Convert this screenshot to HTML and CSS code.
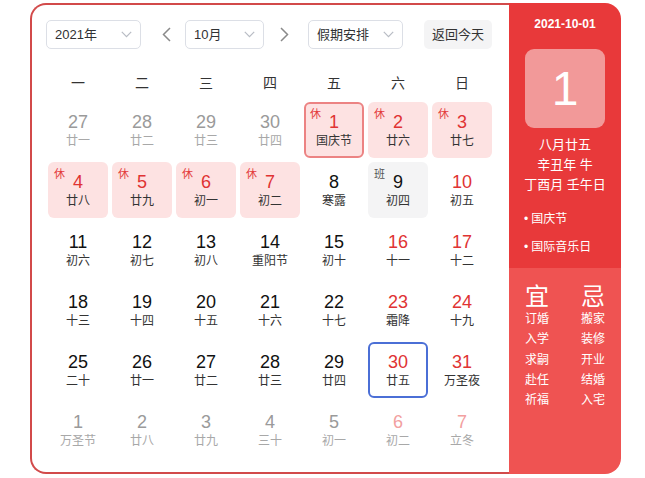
FILE: index.html
```html
<!DOCTYPE html>
<html lang="zh">
<head>
<meta charset="utf-8">
<title>日历</title>
<link rel="stylesheet" href="styles.css">
</head>
<body>
<div class="calendar">
  <div class="main">
    <div class="toolbar">
      <div class="select year"><span>2021年</span><svg class="chev" width="11" height="7" viewBox="0 0 11 7"><polyline points="0.8,0.8 5.5,5.6 10.2,0.8" fill="none" stroke="#b8bcc4" stroke-width="1.2"/></svg></div>
      <svg class="arrow prev" width="9" height="15" viewBox="0 0 9 15"><polyline points="8,1 1.5,7.5 8,14" fill="none" stroke="#8a8a8a" stroke-width="1.5"/></svg>
      <div class="select month"><span>10月</span><svg class="chev" width="11" height="7" viewBox="0 0 11 7"><polyline points="0.8,0.8 5.5,5.6 10.2,0.8" fill="none" stroke="#b8bcc4" stroke-width="1.2"/></svg></div>
      <svg class="arrow next" width="9" height="15" viewBox="0 0 9 15"><polyline points="1,1 7.5,7.5 1,14" fill="none" stroke="#8a8a8a" stroke-width="1.5"/></svg>
      <div class="select holiday"><span>假期安排</span><svg class="chev" width="11" height="7" viewBox="0 0 11 7"><polyline points="0.8,0.8 5.5,5.6 10.2,0.8" fill="none" stroke="#b8bcc4" stroke-width="1.2"/></svg></div>
      <div class="today-btn">返回今天</div>
    </div>
    <div class="weekdays">
      <div>一</div><div>二</div><div>三</div><div>四</div><div>五</div><div>六</div><div>日</div>
    </div>
    <div class="grid">
      <div class="cell out"><div class="num">27</div><div class="lunar">廿一</div></div>
      <div class="cell out"><div class="num">28</div><div class="lunar">廿二</div></div>
      <div class="cell out"><div class="num">29</div><div class="lunar">廿三</div></div>
      <div class="cell out"><div class="num">30</div><div class="lunar">廿四</div></div>
      <div class="cell hol sel"><span class="tag">休</span><div class="num">1</div><div class="lunar">国庆节</div></div>
      <div class="cell hol"><span class="tag">休</span><div class="num">2</div><div class="lunar">廿六</div></div>
      <div class="cell hol"><span class="tag">休</span><div class="num">3</div><div class="lunar">廿七</div></div>

      <div class="cell hol"><span class="tag">休</span><div class="num">4</div><div class="lunar">廿八</div></div>
      <div class="cell hol"><span class="tag">休</span><div class="num">5</div><div class="lunar">廿九</div></div>
      <div class="cell hol"><span class="tag">休</span><div class="num">6</div><div class="lunar">初一</div></div>
      <div class="cell hol"><span class="tag">休</span><div class="num">7</div><div class="lunar">初二</div></div>
      <div class="cell"><div class="num">8</div><div class="lunar">寒露</div></div>
      <div class="cell work"><span class="tag">班</span><div class="num">9</div><div class="lunar">初四</div></div>
      <div class="cell wk"><div class="num">10</div><div class="lunar">初五</div></div>

      <div class="cell"><div class="num">11</div><div class="lunar">初六</div></div>
      <div class="cell"><div class="num">12</div><div class="lunar">初七</div></div>
      <div class="cell"><div class="num">13</div><div class="lunar">初八</div></div>
      <div class="cell"><div class="num">14</div><div class="lunar">重阳节</div></div>
      <div class="cell"><div class="num">15</div><div class="lunar">初十</div></div>
      <div class="cell wk"><div class="num">16</div><div class="lunar">十一</div></div>
      <div class="cell wk"><div class="num">17</div><div class="lunar">十二</div></div>

      <div class="cell"><div class="num">18</div><div class="lunar">十三</div></div>
      <div class="cell"><div class="num">19</div><div class="lunar">十四</div></div>
      <div class="cell"><div class="num">20</div><div class="lunar">十五</div></div>
      <div class="cell"><div class="num">21</div><div class="lunar">十六</div></div>
      <div class="cell"><div class="num">22</div><div class="lunar">十七</div></div>
      <div class="cell wk"><div class="num">23</div><div class="lunar">霜降</div></div>
      <div class="cell wk"><div class="num">24</div><div class="lunar">十九</div></div>

      <div class="cell"><div class="num">25</div><div class="lunar">二十</div></div>
      <div class="cell"><div class="num">26</div><div class="lunar">廿一</div></div>
      <div class="cell"><div class="num">27</div><div class="lunar">廿二</div></div>
      <div class="cell"><div class="num">28</div><div class="lunar">廿三</div></div>
      <div class="cell"><div class="num">29</div><div class="lunar">廿四</div></div>
      <div class="cell wk today"><div class="num">30</div><div class="lunar">廿五</div></div>
      <div class="cell wk"><div class="num">31</div><div class="lunar">万圣夜</div></div>

      <div class="cell out"><div class="num">1</div><div class="lunar">万圣节</div></div>
      <div class="cell out"><div class="num">2</div><div class="lunar">廿八</div></div>
      <div class="cell out"><div class="num">3</div><div class="lunar">廿九</div></div>
      <div class="cell out"><div class="num">4</div><div class="lunar">三十</div></div>
      <div class="cell out"><div class="num">5</div><div class="lunar">初一</div></div>
      <div class="cell out outwk"><div class="num">6</div><div class="lunar">初二</div></div>
      <div class="cell out outwk"><div class="num">7</div><div class="lunar">立冬</div></div>
    </div>
  </div>
  <div class="side">
    <div class="side-top">
      <div class="date">2021-10-01</div>
      <div class="bigday">1</div>
      <div class="lunar-info">
        <div>八月廿五</div>
        <div>辛丑年 牛</div>
        <div>丁酉月 壬午日</div>
      </div>
      <ul class="fests">
        <li>国庆节</li>
        <li>国际音乐日</li>
      </ul>
    </div>
    <div class="side-bottom">
      <div class="col">
        <div class="head">宜</div>
        <div>订婚</div><div>入学</div><div>求嗣</div><div>赴任</div><div>祈福</div>
      </div>
      <div class="col">
        <div class="head">忌</div>
        <div>搬家</div><div>装修</div><div>开业</div><div>结婚</div><div>入宅</div>
      </div>
    </div>
  </div>
</div>
</body>
</html>
```

FILE: styles.css
```css
* { box-sizing: border-box; }
html, body { margin: 0; padding: 0; background: #fff; }
body {
  padding: 3px 0 0 30px;
  font-family: "Liberation Sans", "Noto Sans CJK SC", sans-serif;
  color: #333;
}
.calendar {
  display: flex;
  width: 591px;
  height: 471px;
}
.main {
  width: 479px;
  height: 471px;
  border: 2px solid #d24a4a;
  border-right: none;
  border-radius: 16px 0 0 16px;
  padding: 15px 15px 0 14px;
}
.toolbar {
  display: flex;
  align-items: center;
  height: 29px;
}
.select {
  height: 29px;
  border: 1px solid #dcdfe6;
  border-radius: 5px;
  display: flex;
  align-items: center;
  justify-content: space-between;
  padding: 0 8px 0 8px;
  font-size: 13px;
  color: #303133;
}
.select span { line-height: 18px; }
.select.year { width: 95px; }
.select.month { width: 79px; }
.select.holiday { width: 95px; }
.arrow.prev { margin: 0 14px 0 21px; }
.arrow.next { margin: 0 19px 0 16px; }
.today-btn {
  margin-left: 21px;
  width: 68px;
  height: 29px;
  background: #f4f4f5;
  border-radius: 5px;
  font-size: 13px;
  line-height: 29px;
  text-align: center;
  color: #333;
}
.weekdays {
  margin-top: 17px;
  display: grid;
  grid-template-columns: repeat(7, 64px);
  height: 34px;
  font-size: 14px;
  line-height: 34px;
  text-align: center;
  color: #333;
}
.grid {
  display: grid;
  grid-template-columns: repeat(7, 64px);
  grid-auto-rows: 60px;
}
.cell {
  position: relative;
  margin: 2px;
  border-radius: 6px;
  text-align: center;
  padding-top: 10px;
  border: 2px solid transparent;
}
.cell .num {
  font-size: 18px;
  line-height: 20px;
  margin-top: -2px;
  color: #111;
}
.cell .lunar {
  font-size: 12px;
  line-height: 16px;
  margin-top: 1px;
  color: #333;
}
.cell .tag {
  position: absolute;
  top: 3px;
  left: 4px;
  font-size: 11px;
  line-height: 14px;
  color: #e33b3b;
}
.cell.wk .num { color: #e03333; }
.cell.hol { background: #fde2e2; }
.cell.hol .num { color: #e03333; }
.cell.work { background: #f4f4f5; }
.cell.work .tag { color: #555; }
.cell.sel { border-color: #ec8383; }
.cell.today { border-color: #4b6fd6; }
.cell.out .num { color: #9a9a9a; }
.cell.out .lunar { color: #a8a8a8; }
.cell.outwk .num { color: #f2a0a0; }
.side {
  width: 112px;
  height: 471px;
  border-radius: 0 16px 16px 0;
  overflow: hidden;
  color: #fff;
  display: flex;
  flex-direction: column;
}
.side-top {
  height: 265px;
  background: #e8393a;
  padding-top: 13px;
}
.date {
  text-align: center;
  font-size: 12px;
  font-weight: bold;
  line-height: 16px;
}
.bigday {
  margin: 17px auto 0;
  width: 80px;
  height: 79px;
  border-radius: 9px;
  background: #f29999;
  font-size: 48px;
  line-height: 79px;
  text-align: center;
  color: #fff;
}
.lunar-info {
  margin-top: 7px;
  text-align: center;
  font-size: 13px;
  line-height: 20px;
}
.fests {
  list-style: none;
  margin: 10px 0 0;
  padding: 0 0 0 15px;
  font-size: 12px;
  line-height: 28px;
}
.fests li::before {
  content: "•";
  margin-right: 3px;
}
.side-bottom {
  flex: 1;
  background: #ef5352;
  display: flex;
  padding-top: 17px;
}
.col {
  width: 56px;
  text-align: center;
  font-size: 12px;
  line-height: 20.3px;
}
.col .head {
  font-size: 24px;
  line-height: 24px;
  margin-bottom: 0;
}
```
